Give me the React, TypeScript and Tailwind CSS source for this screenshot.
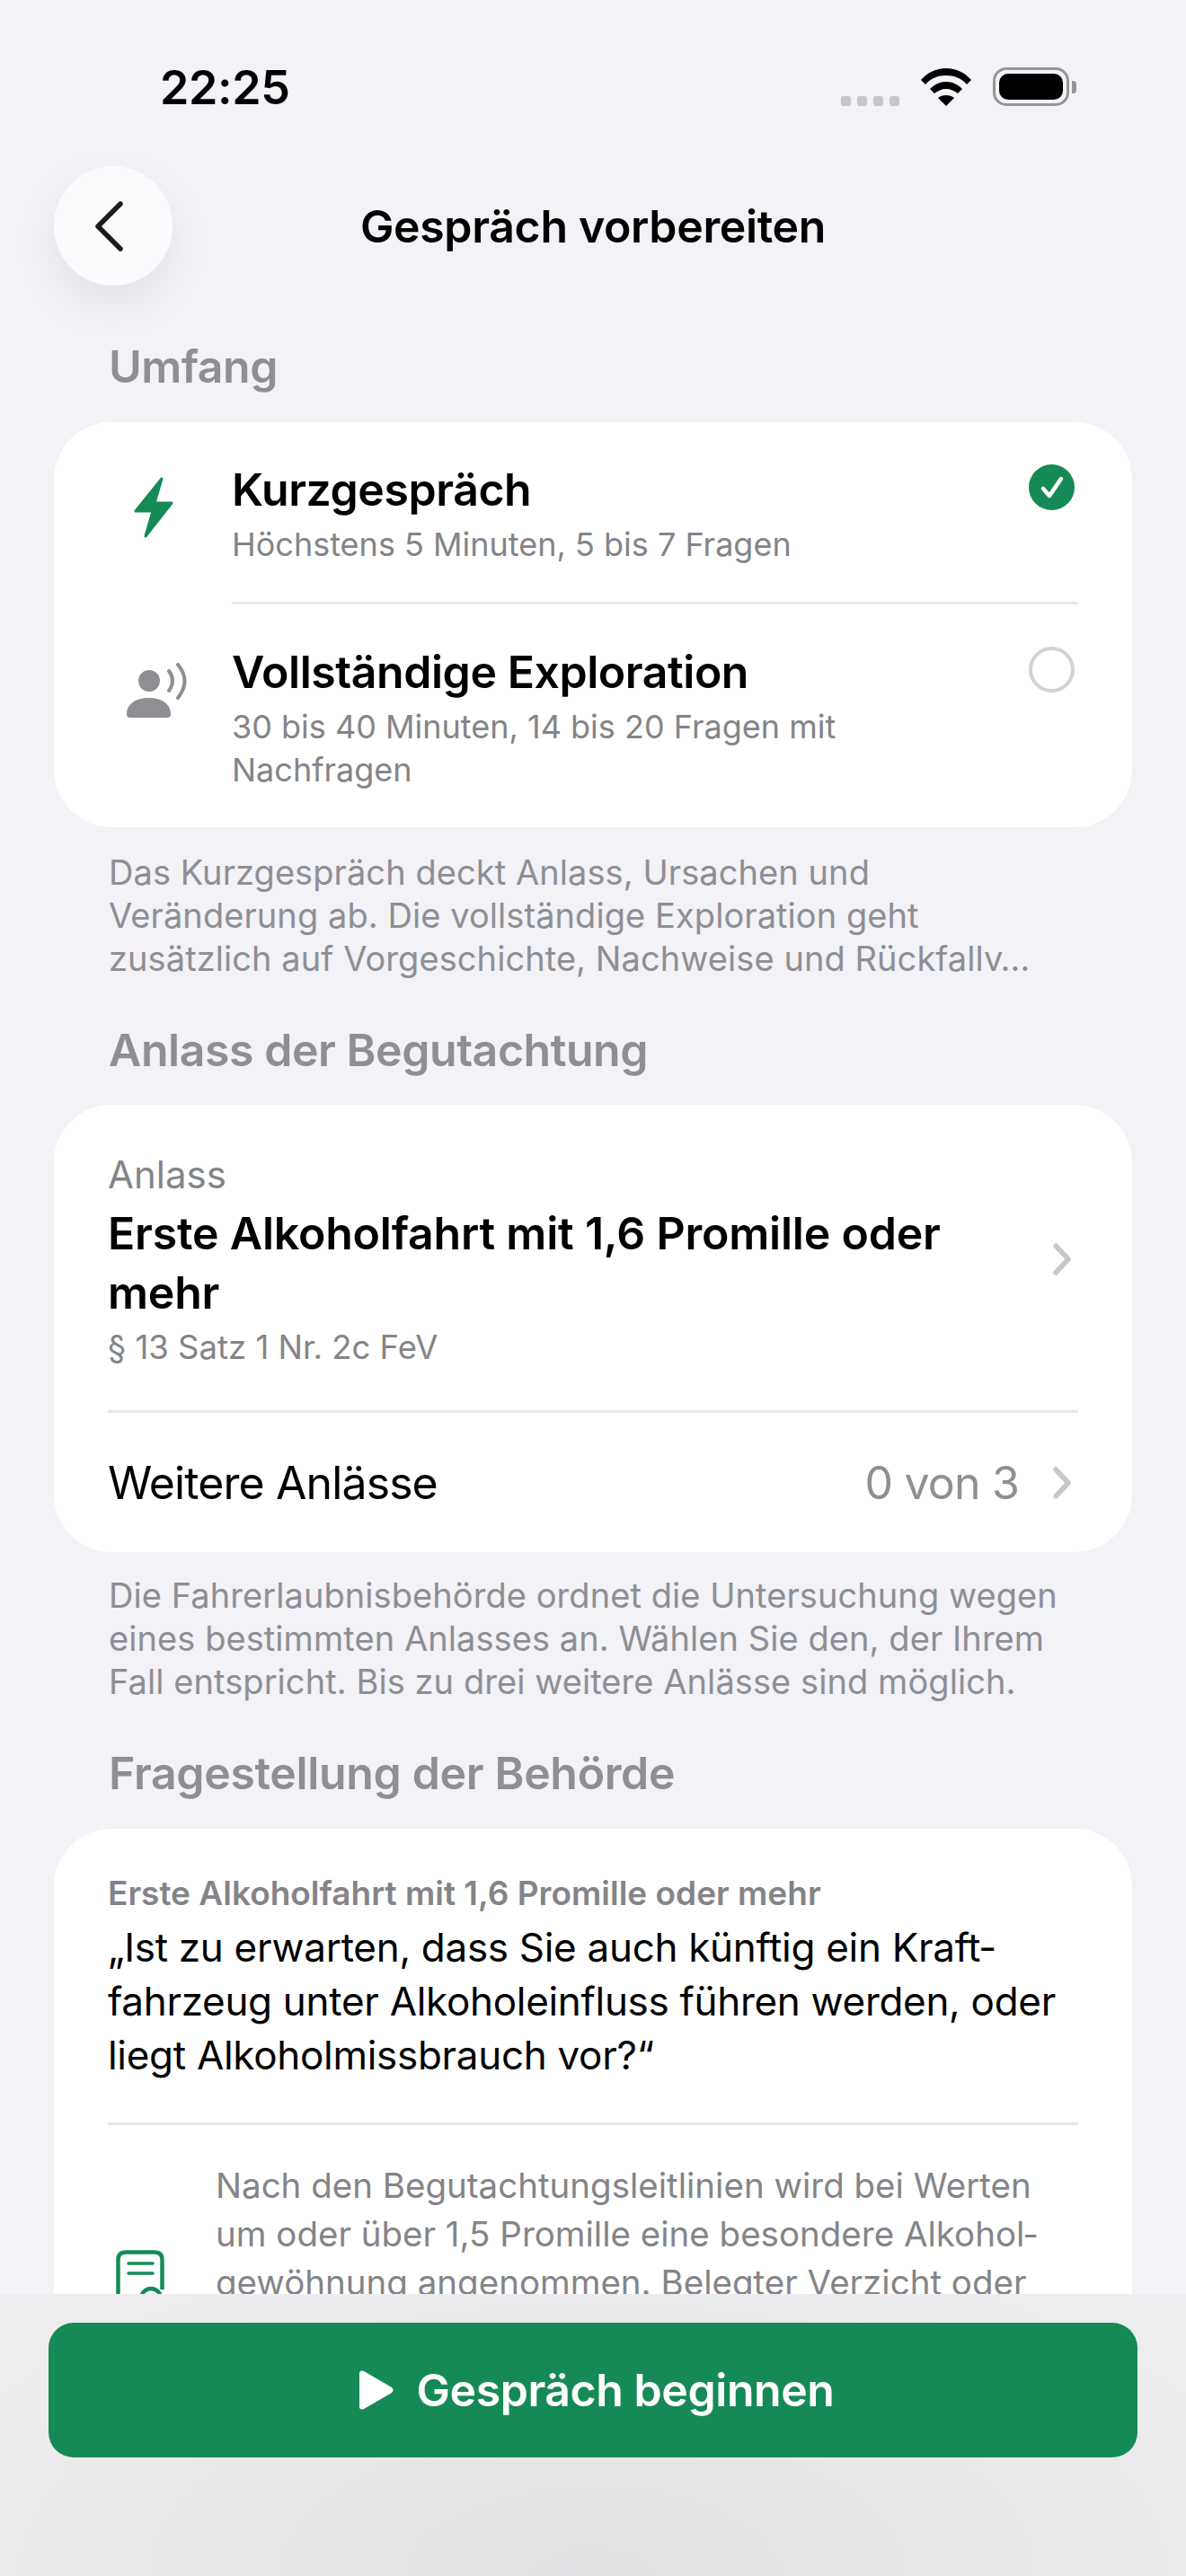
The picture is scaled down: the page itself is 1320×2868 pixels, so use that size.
import React from "react";

function Bolt() {
  return (
    <svg width="46" height="70" viewBox="0 0 46 70" className="block">
      <path d="M32 3 L3 39 L22 39 L14 67 L43 30 L24 30 Z" fill="#168a56" stroke="#168a56" strokeWidth="3" strokeLinejoin="round" />
    </svg>
  );
}

function Speaker() {
  return (
    <svg width="70" height="62" viewBox="0 0 70 62" className="block">
      <circle cx="25" cy="20" r="12" fill="#8e8e93" />
      <path d="M0 57 C0 46 10 39 24.500 39 C39 39 49 46 49 57 Q49 61 45 61 L4 61 Q0 61 0 57 Z" fill="#8e8e93" />
      <path d="M47 9 Q55 20 47 31" stroke="#8e8e93" strokeWidth="4" strokeLinecap="round" fill="none" />
      <path d="M57 2 Q72 20 57 39" stroke="#8e8e93" strokeWidth="4" strokeLinecap="round" fill="none" />
    </svg>
  );
}

function Chevron({ className = "" }: { className?: string }) {
  return (
    <svg width="22" height="36" viewBox="0 0 22 36" className={`block shrink-0 ${className}`}>
      <path d="M3 3 L17 18 L3 33" stroke="#c7c7cc" strokeWidth="5.500" strokeLinecap="round" strokeLinejoin="round" fill="none" />
    </svg>
  );
}

function Doc() {
  return (
    <svg width="54" height="76" viewBox="0 0 54 76" className="block">
      <path d="M2.500 70 L2.500 11 Q2.500 2.500 11 2.500 L43 2.500 Q51.500 2.500 51.500 11 L51.500 44" stroke="#168a56" strokeWidth="4.500" fill="none" />
      <path d="M14 15 L41 15 M14 26 L41 26" stroke="#168a56" strokeWidth="3.500" strokeLinecap="round" />
      <circle cx="39" cy="54" r="11" stroke="#168a56" strokeWidth="4.500" fill="white" />
    </svg>
  );
}

function Divider({ className }: { className: string }) {
  return <div className={`h-[3px] bg-[#e8e8ea] ${className}`} />;
}

export default function App() {
  return (
    <div className="relative h-[2868px] w-[1320px] overflow-hidden bg-[#f2f2f7] font-['Inter','Liberation_Sans',sans-serif] text-black">
      {/* Status bar */}
      <div className="flex h-[185px] items-start justify-between pl-[178px] pr-[122px] pt-[70px]">
        <span className="text-[52px] font-semibold leading-[56px] tracking-[-0.4px]">22:25</span>
        <div className="flex items-center gap-[23px] pt-[5px]">
          <div className="flex items-center gap-[7px] pt-[31px]">
            <span className="h-[11px] w-[11px] rounded-[3px] bg-[#c6c6c9]" />
            <span className="h-[11px] w-[11px] rounded-[3px] bg-[#c6c6c9]" />
            <span className="h-[11px] w-[11px] rounded-[3px] bg-[#c6c6c9]" />
            <span className="h-[11px] w-[11px] rounded-[3px] bg-[#c6c6c9]" />
          </div>
          <svg width="58" height="42" viewBox="0 0 58 42" className="block">
            <path d="M29 0 C40 0 50 5 57 13 L52 18 C46 11 38 8 29 8 C20 8 12 11 6 18 L1 13 C8 5 18 0 29 0 Z" fill="#000" />
            <path d="M29 15 C36 15 42 18 47 23 L42 28 C38 25 34 23 29 23 C24 23 20 25 16 28 L11 23 C16 18 22 15 29 15 Z" fill="#000" />
            <path d="M29 30 C32 30 36 31 38 33 L29 42 L20 33 C22 31 26 30 29 30 Z" fill="#000" />
          </svg>
          <div className="flex items-center gap-[3px]">
            <div className="flex h-[43px] w-[85px] items-center justify-center rounded-[15px] border-[3px] border-[#959599] p-[4px]">
              <div className="h-full w-full rounded-[10px] bg-black" />
            </div>
            <div className="h-[14px] w-[5px] rounded-r-[4px] bg-[#959599]" />
          </div>
        </div>
      </div>

      {/* Nav */}
      <div className="relative flex h-[133px] items-center justify-center">
        <button className="absolute left-[60px] top-0 flex h-[133px] w-[132px] items-center justify-center rounded-full bg-[#fbfbfd] shadow-[0_20px_50px_rgba(0,0,0,0.07)]">
          <svg width="40" height="60" viewBox="0 0 40 60" className="mr-[6px] block">
            <path d="M31 5 L6 30 L31 55" stroke="#1c1c1e" strokeWidth="5.500" strokeLinecap="round" strokeLinejoin="round" fill="none" />
          </svg>
        </button>
        <h1 className="text-[50px] font-semibold leading-[60px] tracking-[-0.35px]">Gespräch vorbereiten</h1>
      </div>

      <div className="px-[60px]">
        {/* Umfang */}
        <h2 className="mt-[60px] px-[61px] text-[50px] font-semibold leading-[60px] tracking-[-0.5px] text-[#8e8e93]">Umfang</h2>
        <section className="mt-[32px] rounded-[64px] bg-white">
          <div className="flex pl-[88px] pr-[60px]">
            <div className="w-[110px] shrink-0 pt-[60px]"><Bolt /></div>
            <div className="min-w-0 flex-1 pt-[44px]">
              <div className="flex items-start justify-between">
                <div>
                  <div className="text-[50px] font-semibold leading-[62px] tracking-[-0.45px]">Kurzgespräch</div>
                  <div className="mt-[6px] text-[36px] leading-[48px] text-[#848488]">Höchstens 5 Minuten, 5 bis 7 Fragen</div>
                </div>
                <div className="mr-[4px] mt-[3px] flex h-[51px] w-[51px] items-center justify-center rounded-full bg-[#168a56]">
                  <svg width="30" height="30" viewBox="0 0 30 30" className="block">
                    <path d="M5 16 L12 24 L25 5" stroke="#fff" strokeWidth="4.500" strokeLinecap="round" strokeLinejoin="round" fill="none" />
                  </svg>
                </div>
              </div>
              <Divider className="mt-[40px]" />
            </div>
          </div>
          <div className="flex pl-[81px] pr-[60px]">
            <div className="w-[117px] shrink-0 pt-[65px]"><Speaker /></div>
            <div className="min-w-0 flex-1 pb-[40px] pt-[44px]">
              <div className="flex items-start justify-between">
                <div className="max-w-[740px]">
                  <div className="text-[50px] font-semibold leading-[62px] tracking-[-0.45px]">Vollständige Exploration</div>
                  <div className="mt-[6px] text-[36px] leading-[48px] text-[#848488]">30 bis 40 Minuten, 14 bis 20 Fragen mit Nachfragen</div>
                </div>
                <div className="mr-[4px] mt-[3px] h-[51px] w-[51px] rounded-full border-[4px] border-[#d2d2d4]" />
              </div>
            </div>
          </div>
        </section>
        <p className="mt-[26px] px-[61px] text-[38px] leading-[48px] tracking-[0.07px] text-[#8e8e93]">
          Das Kurzgespräch deckt Anlass, Ursachen und<br />
          Veränderung ab. Die vollständige Exploration geht<br />
          zusätzlich auf Vorgeschichte, Nachweise und Rückfallv…
        </p>

        {/* Anlass */}
        <h2 className="mt-[48px] px-[61px] text-[50px] font-semibold leading-[60px] tracking-[-0.45px] text-[#8e8e93]">Anlass der Begutachtung</h2>
        <section className="mt-[31px] rounded-[64px] bg-white pl-[60px] pr-[60px]">
          <div className="flex items-center justify-between pr-[6px] pt-[52px]">
            <div className="max-w-[980px]">
              <div className="text-[42px] leading-[52px] text-[#848488]">Anlass</div>
              <div className="mt-[6px] text-[50px] font-semibold leading-[66px] tracking-[-0.2px]">Erste Alkoholfahrt mit 1,6 Promille oder mehr</div>
              <div className="mt-[5px] text-[36.500px] leading-[46px] text-[#848488]">§ 13 Satz 1 Nr. 2c FeV</div>
            </div>
            <Chevron className="mb-[2px]" />
          </div>
          <Divider className="mt-[47px]" />
          <div className="flex h-[155px] items-center justify-between pr-[6px] pt-[1px]">
            <span className="text-[50px] leading-[60px] tracking-[-0.9px]">Weitere Anlässe</span>
            <div className="flex items-center gap-[38px]">
              <span className="text-[50px] leading-[60px] tracking-[-0.8px] text-[#8e8e93]">0 von 3</span>
              <Chevron />
            </div>
          </div>
        </section>
        <p className="mt-[24px] px-[61px] text-[38px] leading-[48px] tracking-[0.07px] text-[#8e8e93]">
          Die Fahrerlaubnisbehörde ordnet die Untersuchung wegen<br />
          eines bestimmten Anlasses an. Wählen Sie den, der Ihrem<br />
          Fall entspricht. Bis zu drei weitere Anlässe sind möglich.
        </p>

        {/* Fragestellung */}
        <h2 className="mt-[48px] px-[61px] text-[50px] font-semibold leading-[60px] tracking-[-0.35px] text-[#8e8e93]">Fragestellung der Behörde</h2>
        <section className="mt-[32px] rounded-[64px] bg-white px-[60px] pb-[200px]">
          <div className="pt-[48px] text-[37px] font-semibold leading-[48px] text-[#848488]">Erste Alkoholfahrt mit 1,6 Promille oder mehr</div>
          <div className="mt-[6px] text-[44px] leading-[60px] tracking-[-0.3px]">„Ist zu erwarten, dass Sie auch künftig ein Kraft&shy;fahrzeug unter Alkoholeinfluss führen werden, oder liegt Alkoholmissbrauch vor?“</div>
          <Divider className="mt-[45px]" />
          <div className="mt-[40px] flex">
            <div className="w-[120px] shrink-0 pl-[9px] pt-[99px]"><Doc /></div>
            <p className="text-[38.500px] leading-[54px] text-[#848488]">Nach den Begutachtungsleitlinien wird bei Werten um oder über 1,5 Promille eine besondere Alkohol&shy;gewöhnung angenommen. Belegter Verzicht oder Abstinenz ist daher entscheidend.</p>
          </div>
        </section>
      </div>

      {/* Bottom bar */}
      <div className="absolute bottom-0 left-0 right-0 h-[314px] bg-[radial-gradient(ellipse_at_50%_100%,#e2e2e5_0%,#e8e8ea_45%,#efeff1_100%)] px-[54px] pt-[32px]">
        <button className="flex h-[150px] w-full items-center justify-center gap-[25px] rounded-[28px] bg-[#168a56] pl-[5px] text-white">
          <svg width="42" height="46" viewBox="0 0 42 46" className="block">
            <path d="M3 5 Q3 0 8 2 L39 20 Q42 23 39 26 L8 44 Q3 46 3 41 Z" fill="#fff" />
          </svg>
          <span className="text-[50px] font-semibold leading-[60px] tracking-[-0.45px]">Gespräch beginnen</span>
        </button>
      </div>
    </div>
  );
}
